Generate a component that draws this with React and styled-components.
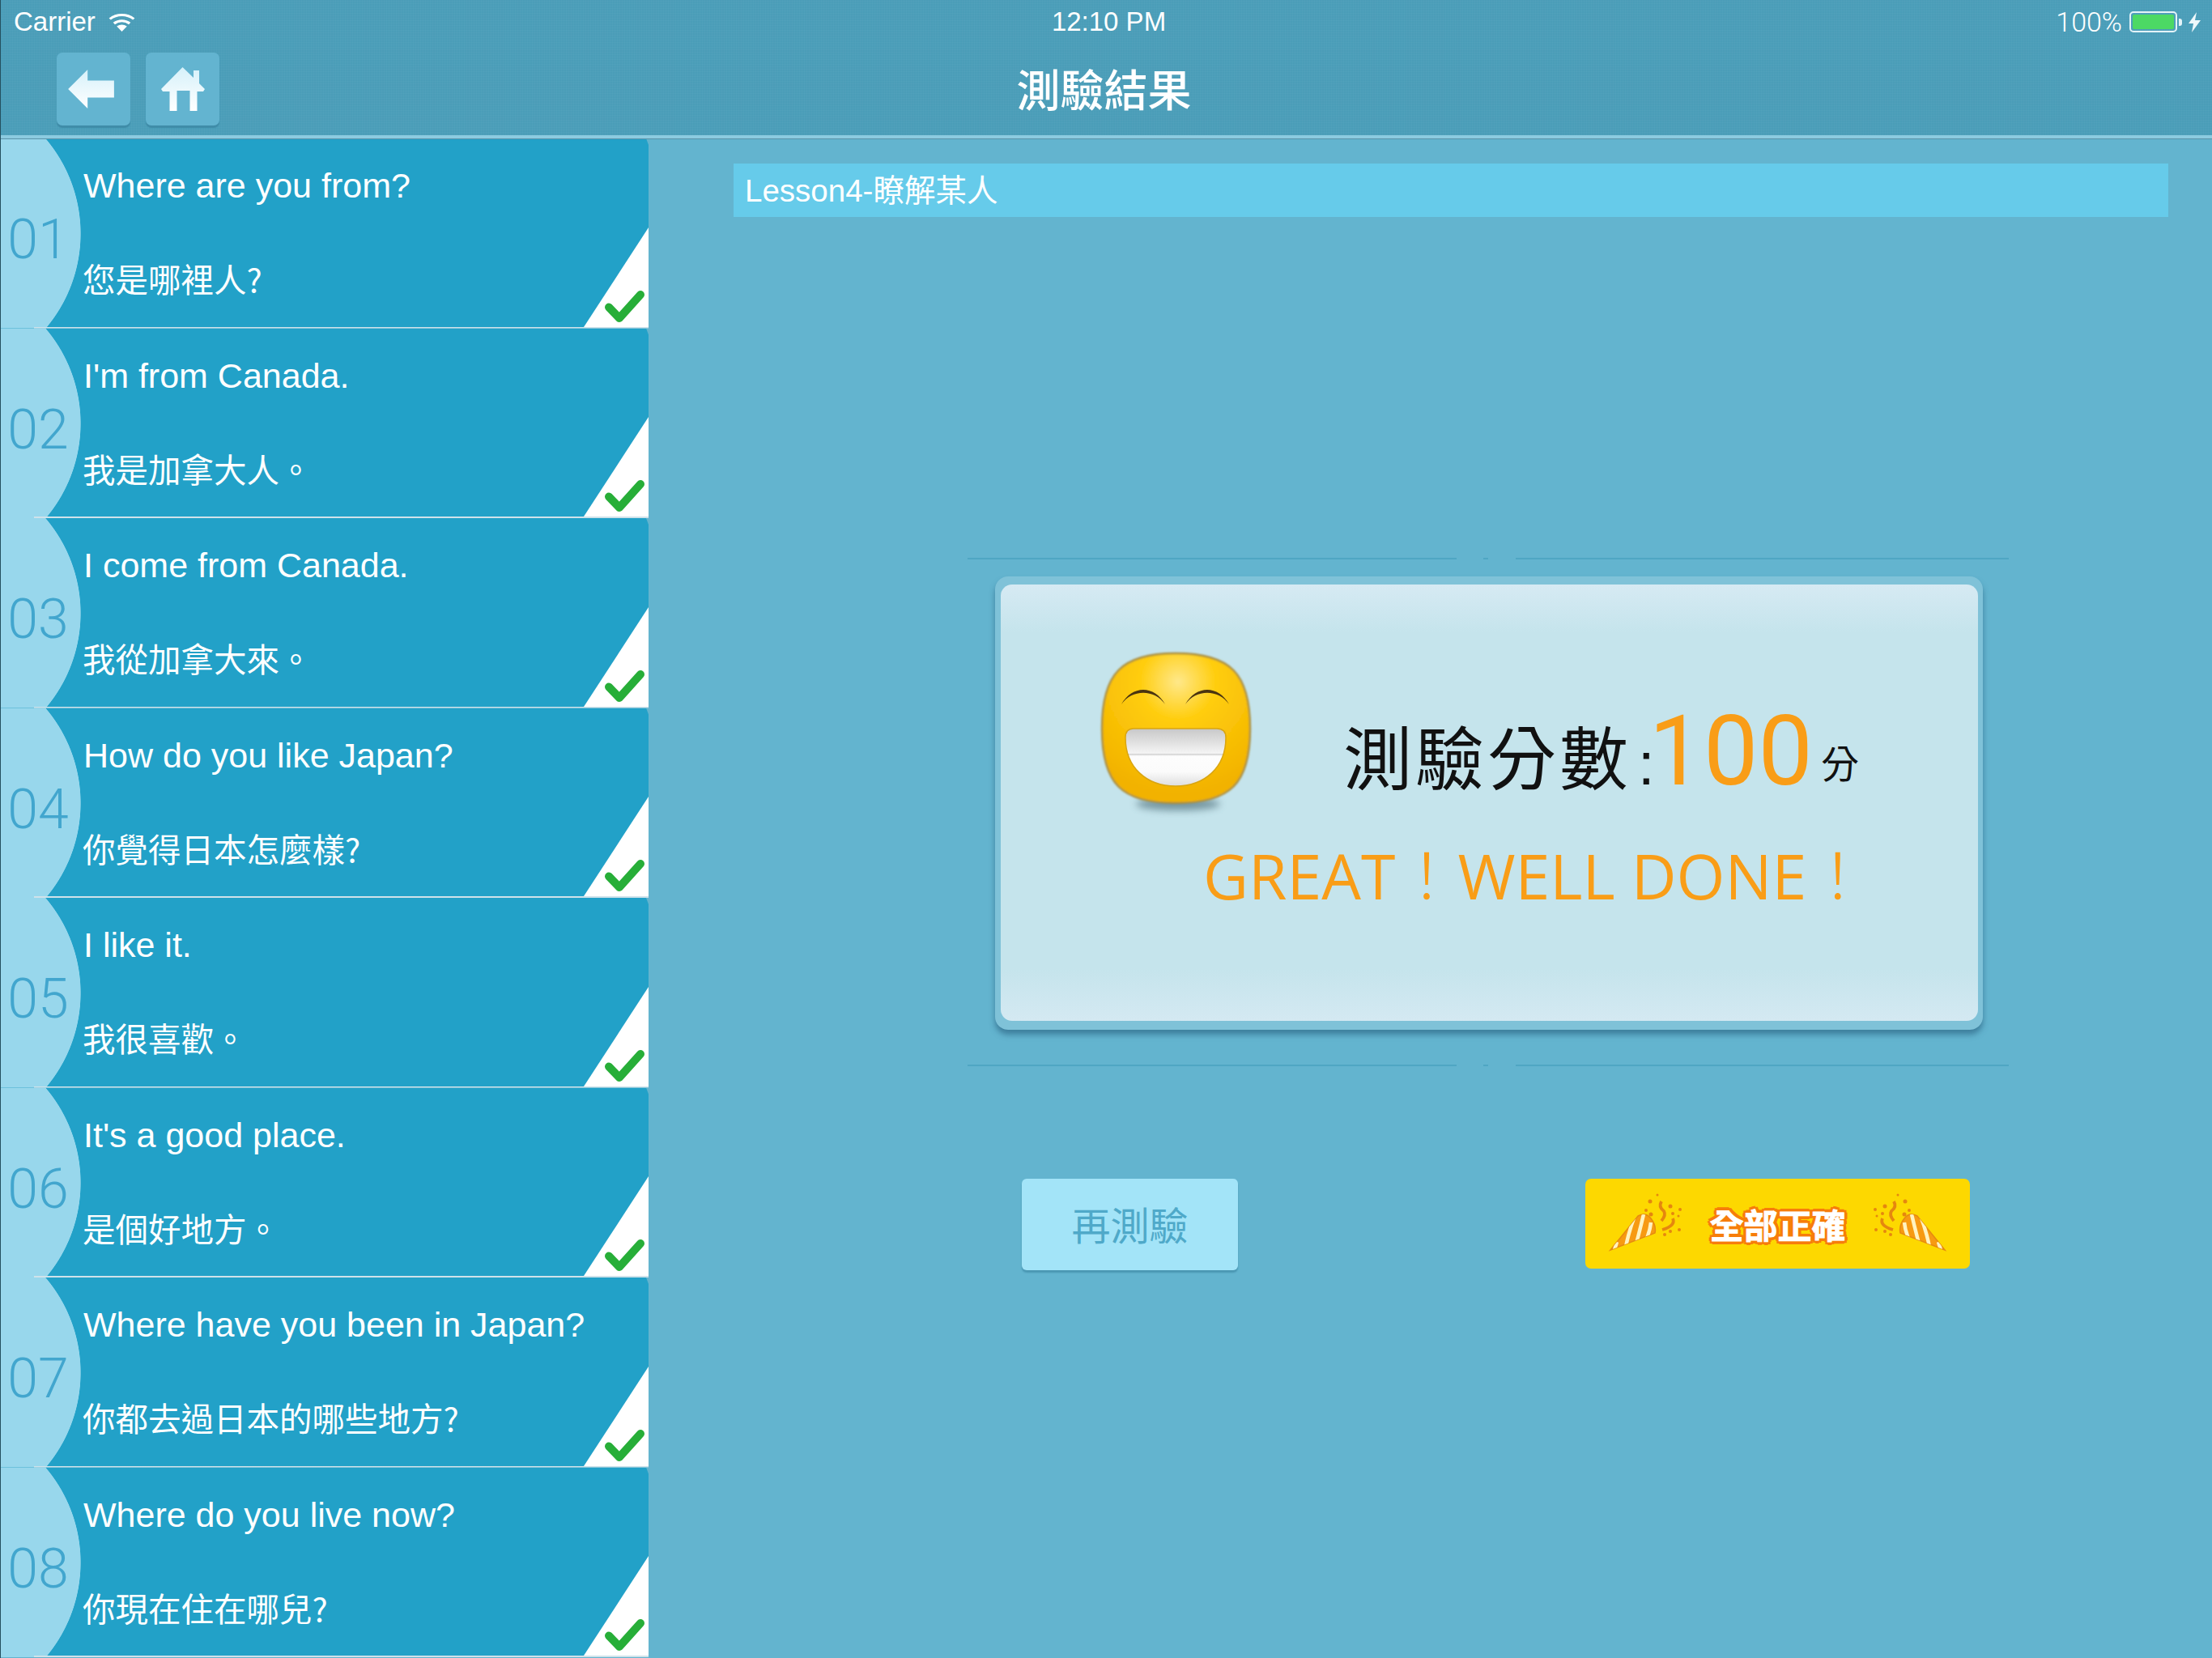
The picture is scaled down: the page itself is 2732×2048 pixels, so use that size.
import React from "react";
import styled, { createGlobalStyle } from "styled-components";

const Global = createGlobalStyle`
  html, body { margin: 0; padding: 0; background: #63b4cf; }
  #root { width: 2732px; height: 2048px; overflow: hidden; }
  * { box-sizing: border-box; }
`;

const CJK = `"Noto Sans CJK TC", "Noto Sans CJK SC", sans-serif`;
const LATIN = `"Liberation Sans", "Noto Sans CJK TC", sans-serif`;

const Page = styled.div`
  position: relative;
  width: 2732px; height: 2048px; display: flex; flex-direction: column;
  background: #63b4cf; font-family: ${LATIN}; color: #fff;
  &::after { content: ""; position: absolute; z-index: 2; left: 0; top: 0; bottom: 0; width: 1px; background: #24505f; }
`;
const Header = styled.header`
  position: relative; z-index: 1;
  height: 171px; flex: none; padding: 0 14px 0 17px;
  background-color: #4a9db8;
  background-image:
    repeating-linear-gradient(0deg, rgba(255,255,255,.025) 0 1px, transparent 1px 3px),
    repeating-linear-gradient(90deg, rgba(255,255,255,.025) 0 1px, transparent 1px 3px);
  border-bottom: 4px solid #8ccbe0;
  box-shadow: 0 1px 0 #5a93a8;
`;
const StatusBar = styled.div`
  height: 54px; display: grid; grid-template-columns: 1fr auto 1fr; align-items: center;
  font-size: 33px;
`;
const StatusLeft = styled.div`display: flex; align-items: center; gap: 16px;`;
const StatusTime = styled.div`margin-left: 4px;`;
const StatusRight = styled.div`
  display: flex; align-items: center; justify-content: flex-end; gap: 9px;
  font: 300 34px/1 Roboto, sans-serif;
`;
const Battery = styled.div`
  position: relative; width: 59px; height: 26px; border: 2px solid #e4f3f8; border-radius: 5px; padding: 2px;
  margin-right: 5px;
  &::after { content: ""; position: absolute; right: -8px; top: 7px; width: 4px; height: 9px; background: #e4f3f8; border-radius: 0 3px 3px 0; }
`;
const BatteryFill = styled.div`height: 100%; background: #4cd964; border-radius: 2px;`;
const NavBar = styled.div`
  height: 113px; display: grid; grid-template-columns: 1fr auto 1fr; align-items: start;
`;
const NavButtons = styled.div`display: flex; gap: 19px; padding: 11px 0 0 53px;`;
const NavButton = styled.div`
  width: 91px; height: 90px; border-radius: 7px; background: #63b4d0;
  box-shadow: 0 3px 1px #3f8ca8; display: flex; align-items: center; justify-content: center;
`;
const Title = styled.h1`
  margin: 25px 0 0; font: 500 54px/60px ${CJK}; color: #fff; transform: translateX(-4px);
`;
const Body = styled.div`flex: 1; display: flex; min-height: 0;`;
const Sidebar = styled.aside`width: 801px; flex: none; display: flex; flex-direction: column;`;
const Row = styled.div`
  position: relative; height: 234.5px; flex: none;
  display: grid; grid-template-columns: 92px 1fr;
  background:
    linear-gradient(#cfe2ea, #cfe2ea) no-repeat 42px 100% / calc(100% - 42px) 2px,
    radial-gradient(circle 181px at -81px 50%, #98d7ec 99.6%, rgba(152,215,236,0) 100%),
    #22a1c8;
  clip-path: polygon(0 0, calc(100% - 3px) 0, 100% 8px, 100% 100%, 0 100%);
`;
const Num = styled.div`
  align-self: center; text-align: center; padding: 16px 0 0 2px;
  font: 300 68px/72px Roboto, sans-serif; color: #42a6ce;
`;
const RowText = styled.div`padding: 28px 0 0 11px; display: flex; flex-direction: column; gap: 55px;`;
const En = styled.div`font: 400 43px/60px ${LATIN};`;
const Zh = styled.div`font: 400 40.5px/60px ${CJK}; margin-left: -1px;`;
const Mark = styled.svg`position: absolute; right: 0; bottom: 2px; display: block;`;
const Main = styled.main`flex: 1; padding: 31px 54px 0 105px; min-width: 0;`;
const LessonBar = styled.div`
  height: 66px; background: #66cbea; padding: 2px 0 0 14px; display: flex; align-items: center;
  font: 400 38.5px/1 ${LATIN};
`;
const Frame = styled.div`width: 1288px; margin: 421px 0 0 289px;`;
const Rule = styled.div`display: flex; height: 2px; align-items: stretch;`;
const RuleSeg = styled.div`background: #4fa6c3; width: ${p => p.$w}px; margin-right: ${p => p.$gap || 0}px;`;
const Card = styled.div`
  width: 1220px; height: 560px; margin: 21px 0 43px 34px; padding: 10px 6px 11px 7px;
  border-radius: 16px; background: #7fc2d8;
  box-shadow: 0 6px 7px rgba(50,110,140,.75);
`;
const CardInner = styled.div`
  height: 100%; border-radius: 14px;
  background: linear-gradient(#d6eaf3 0, #c5e4ec 11%, #c5e4ec 88%, #d4e9f2 100%);
`;
const ScoreRow = styled.div`display: flex; align-items: flex-start; padding: 58px 0 0 94px;`;
const Face = styled.svg`display: block; flex: none;`;
const Score = styled.div`
  display: flex; align-items: baseline; margin: 88px 0 0 89px; color: #111;
  font: 400 85px/120px ${CJK}; letter-spacing: 4px;
`;
const Colon = styled.span`font: 400 74px/120px ${LATIN}; margin-left: 8px; letter-spacing: -7px;`;
const Points = styled.span`font: 400 120px/120px Roboto, sans-serif; color: #f99d17; letter-spacing: 0;`;
const Unit = styled.span`font: 400 47px/60px ${CJK}; margin-left: 10px; transform: translateY(-8px);`;
const Message = styled.div`
  margin: 10px 0 0 250px; color: #f99d17; font: 500 77px/96px "Open Sans", ${CJK};
`;
const Bang = styled.span`font-weight: 300; font-family: ${CJK};`;
const Actions = styled.div`display: flex; align-items: flex-start; gap: 429px; margin: 139px 0 0 356px;`;
const Retry = styled.div`
  width: 267px; height: 113px; border-radius: 6px; background: #a3e4f8; padding-bottom: 4px;
  box-shadow: 0 3px 2px #4a97b3; display: flex; align-items: center; justify-content: center;
  font: 400 48px/1 ${CJK}; color: #4fa9c9;
`;
const AllRight = styled.div`
  width: 475px; height: 111px; border-radius: 7px; background: #fdd800;
  display: flex; align-items: center; justify-content: center; gap: 30px;
`;
const AllRightText = styled.span`
  font: 700 42px/1 ${CJK}; color: #fff; -webkit-text-stroke: .8px #fff;
  text-shadow: 4px 0 0 #f77d0a, -4px 0 0 #f77d0a, 0 4px 0 #f77d0a, 0 -4px 0 #f77d0a,
    3px 3px 0 #f77d0a, -3px 3px 0 #f77d0a, 3px -3px 0 #f77d0a, -3px -3px 0 #f77d0a;
`;
const Popper = styled.svg`display: block; flex: none; ${p => p.$flip ? "transform: scaleX(-1);" : ""}`;

const rows = [
  ["01", "Where are you from?", "您是哪裡人?"],
  ["02", "I'm from Canada.", "我是加拿大人。"],
  ["03", "I come from Canada.", "我從加拿大來。"],
  ["04", "How do you like Japan?", "你覺得日本怎麼樣?"],
  ["05", "I like it.", "我很喜歡。"],
  ["06", "It's a good place.", "是個好地方。"],
  ["07", "Where have you been in Japan?", "你都去過日本的哪些地方?"],
  ["08", "Where do you live now?", "你現在住在哪兒?"],
];

const Wifi = () => (
  <svg width="33" height="24" viewBox="1.5 0 29 24" preserveAspectRatio="none">
    <path d="M16 24 L10.5 17.5 A8.5 8.5 0 0 1 21.5 17.5 Z" fill="#fff" />
    <path d="M7.5 14 A13 13 0 0 1 24.5 14" fill="none" stroke="#fff" strokeWidth="3" />
    <path d="M3 8.5 A19.5 19.5 0 0 1 29 8.5" fill="none" stroke="#fff" strokeWidth="3" />
  </svg>
);
const Bolt = () => (
  <svg width="15" height="25" viewBox="0 0 15 25">
    <path d="M10 0 L0 14 H6 L4 25 L15 10 H8 Z" fill="#eef8fb" />
  </svg>
);
const BackIcon = () => (
  <svg width="60" height="50" viewBox="0 0 62 52" style={{ marginRight: 5 }}>
    <defs><linearGradient id="ig1" x1="0" y1="0" x2="0" y2="1"><stop offset="0" stopColor="#d6f1fa" /><stop offset="1" stopColor="#fff" /></linearGradient></defs>
    <path d="M1 26 L26 1 V15 H60 V37 H26 V51 Z" fill="url(#ig1)" />
  </svg>
);
const HomeIcon = () => (
  <svg width="56" height="56" viewBox="0 0 56 56">
    <defs><linearGradient id="ig2" x1="0" y1="0" x2="0" y2="1"><stop offset="0" stopColor="#d6f1fa" /><stop offset="1" stopColor="#fff" /></linearGradient></defs>
    <path d="M27.5 1 L41 14 V5 H48 V21 L55 28 L53 31 H45.5 V55 H36.5 V30 H20.5 V55 H11.5 V31 H3 L1 28 Z" fill="url(#ig2)" />
  </svg>
);
const Check = () => (
  <Mark width="82" height="123" viewBox="0 0 82 123">
    <path d="M82 0 V123 H2 Z" fill="#fff" />
    <path d="M33 98.5 L46 112 L72 83" fill="none" stroke="#27ae38" strokeWidth="10" strokeLinecap="round" strokeLinejoin="round" />
  </Mark>
);
const Smile = () => (
  <Face width="240" height="240" viewBox="0 0 240 240">
    <defs>
      <radialGradient id="f1" cx="125" cy="62" r="140" gradientUnits="userSpaceOnUse">
        <stop offset="0" stopColor="#ffe88a" />
        <stop offset=".34" stopColor="#ffcd0c" />
        <stop offset="1" stopColor="#f2b200" />
      </radialGradient>
      <linearGradient id="f2" x1="0" y1="0" x2="0" y2="1">
        <stop offset="0" stopColor="#c8c8c8" />
        <stop offset=".43" stopColor="#f4f4f4" />
        <stop offset=".44" stopColor="#cfcfcf" />
        <stop offset=".48" stopColor="#fdfdfd" />
        <stop offset=".75" stopColor="#fbfbfb" />
        <stop offset="1" stopColor="#dedede" />
      </linearGradient>
      <filter id="f3" x="-30%" y="-100%" width="160%" height="300%"><feGaussianBlur stdDeviation="5" /></filter>
      <filter id="f4"><feGaussianBlur stdDeviation=".8" /></filter>
    </defs>
    <ellipse cx="125" cy="213" rx="52" ry="8" fill="#4a6a74" opacity=".65" filter="url(#f3)" />
    <path d="M122 27 C190 27 214 52 214 120 C214 188 190 212 122 212 C55 212 31 188 31 120 C31 52 55 27 122 27 Z" fill="url(#f1)" stroke="#a98d3e" strokeWidth="2.4" filter="url(#f4)" />
    <path d="M55 90 C68 66 96 66 109 90 C96 71 68 71 55 90 Z" fill="#4a3410" />
    <path d="M134 90 C147 66 175 66 188 90 C175 71 147 71 134 90 Z" fill="#4a3410" />
    <path d="M70 120 H173 Q184 120 184 131 C184 168 158 191 122 191 C86 191 60 168 60 131 Q60 120 70 120 Z" fill="url(#f2)" stroke="#d9a512" strokeWidth="1.5" />
  </Face>
);
const PopperIcon = ({ flip }) => (
  <Popper $flip={flip} width="95" height="80" viewBox="0 0 95 80">
    <defs><clipPath id={flip ? "pc2" : "pc1"}><path d="M3 72 L37 30 Q47 25 53 33 Q60 42 58 51 Z" /></clipPath></defs>
    <path d="M3 72 L37 30 Q47 25 53 33 Q60 42 58 51 Z" fill="#f79a12" stroke="#e58a10" strokeWidth="1.5" />
    <g clipPath={`url(#${flip ? "pc2" : "pc1"})`} fill="none" stroke="#fff3c0" strokeWidth="4.5">
      <path d="M33 30 Q26 48 22 68" />
      <path d="M44 28 Q40 45 35 64" />
      <path d="M53 38 Q52 48 47 60" />
      <path d="M8 72 L11 62" />
    </g>
    <g fill="none" stroke="#e5870f" strokeWidth="3.8">
      <path d="M66 12 Q62 19 69 24 Q72 29 66 36" />
      <path d="M67 47 Q84 42 80 33" />
    </g>
    <g fill="#e5870f">
      <circle cx="52" cy="12" r="2.5" /><circle cx="47" cy="23" r="2" /><circle cx="53" cy="28" r="2.5" />
      <circle cx="77" cy="18" r="2.5" /><circle cx="89" cy="22" r="2" /><circle cx="80" cy="27" r="2" />
      <circle cx="87" cy="30" r="1.5" /><circle cx="88" cy="47" r="2" /><circle cx="70" cy="53" r="2" />
      <circle cx="77" cy="49" r="2" /><circle cx="61" cy="4" r="1.5" />
    </g>
  </Popper>
);

const BrokenRule = () => (
  <Rule>
    <RuleSeg $w={604} $gap={33} />
    <RuleSeg $w={6} $gap={34} />
    <RuleSeg $w={609} />
  </Rule>
);

export default function App() {
  return (
    <Page>
      <Global />
      <Header>
        <StatusBar>
          <StatusLeft><span>Carrier</span><Wifi /></StatusLeft>
          <StatusTime>12:10 PM</StatusTime>
          <StatusRight><span>100%</span><Battery><BatteryFill /></Battery><Bolt /></StatusRight>
        </StatusBar>
        <NavBar>
          <NavButtons>
            <NavButton><BackIcon /></NavButton>
            <NavButton><HomeIcon /></NavButton>
          </NavButtons>
          <Title>測驗結果</Title>
        </NavBar>
      </Header>
      <Body>
        <Sidebar>
          {rows.map(([n, en, zh]) => (
            <Row key={n}>
              <Num>{n}</Num>
              <RowText><En>{en}</En><Zh>{zh}</Zh></RowText>
              <Check />
            </Row>
          ))}
        </Sidebar>
        <Main>
          <LessonBar>Lesson4-瞭解某人</LessonBar>
          <Frame>
            <BrokenRule />
            <Card>
              <CardInner>
                <ScoreRow>
                  <Smile />
                  <Score>測驗分數<Colon>:</Colon><Points>100</Points><Unit>分</Unit></Score>
                </ScoreRow>
                <Message>GREAT<Bang>！</Bang>WELL DONE<Bang>！</Bang></Message>
              </CardInner>
            </Card>
            <BrokenRule />
          </Frame>
          <Actions>
            <Retry>再測驗</Retry>
            <AllRight>
              <PopperIcon />
              <AllRightText>全部正確</AllRightText>
              <PopperIcon flip />
            </AllRight>
          </Actions>
        </Main>
      </Body>
    </Page>
  );
}
